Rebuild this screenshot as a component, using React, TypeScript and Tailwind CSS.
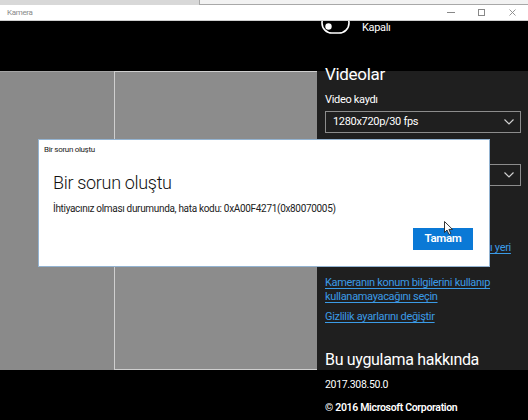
import React from 'react';

const font = { fontFamily: 'Roboto, "Noto Sans", sans-serif' };

function Toggle() {
  return (
    <svg width="30" height="13" viewBox="0 0 30 13" className="shrink-0">
      <rect x="1" y="-8" width="27" height="20" rx="10" fill="none" stroke="#ffffff" strokeWidth="1.6" />
      <circle cx="7.5" cy="5.5" r="3.2" fill="#ffffff" />
    </svg>
  );
}

function Chevron() {
  return (
    <svg width="12" height="8" viewBox="0 0 12 8" className="shrink-0">
      <path d="M1.5 1.5 L6 6 L10.5 1.5" fill="none" stroke="#d0d0d0" strokeWidth="1.2" />
    </svg>
  );
}

function Cursor() {
  return (
    <svg width="10" height="15" viewBox="0 0 10 15">
      <path d="M0.5 0.5 L0.5 11.5 L3 9 L5 13.5 L6.8 12.7 L4.9 8.4 L8.5 8.4 Z" fill="#ffffff" stroke="#222222" strokeWidth="0.9" strokeLinejoin="round" />
    </svg>
  );
}

function WindowControls() {
  return (
    <div className="flex items-center h-full">
      <div className="w-[31px] h-full flex items-center justify-center">
        <div className="w-[8px] h-px bg-[#888888]" />
      </div>
      <div className="w-[31px] h-full flex items-center justify-center">
        <div className="w-[7px] h-[7px] border border-[#888888]" />
      </div>
      <div className="w-[31px] h-full flex items-center justify-center">
        <svg width="7" height="7" viewBox="0 0 7 7">
          <path d="M0.5 0.5 L6.5 6.5 M6.5 0.5 L0.5 6.5" stroke="#888888" strokeWidth="0.9" />
        </svg>
      </div>
    </div>
  );
}

function Dropdown({ value }: { value: string }) {
  return (
    <div className="h-[22px] w-[196px] border border-[#8c8c8c] flex items-center justify-between pl-[7px] pr-[5px] text-[11px] text-white">
      <span>{value}</span>
      <Chevron />
    </div>
  );
}

function Link({ children }: { children: React.ReactNode }) {
  return <span className="text-[#3b9be6] underline underline-offset-2 decoration-[#3b9be6]">{children}</span>;
}

export default function App() {
  return (
    <div className="relative w-[528px] h-[420px] overflow-hidden bg-black select-none tracking-[-0.02em]" style={font}>
      {/* desktop strip behind the window */}
      <div className="flex h-[5px]">
        <div className="w-[199px] bg-[#d8d8d8]" />
        <div className="flex-1 bg-[#f2f2f2] border-l border-b border-[#a8a8a8]" />
      </div>

      {/* title bar */}
      <div className="h-[16px] bg-white border-b border-[#cfcfcf] flex items-center justify-between pl-[7px]">
        <span className="text-[8px] text-[#8a8a8a] leading-none">Kamera</span>
        <WindowControls />
      </div>

      {/* top letterbox with toggle */}
      <div className="h-[50px] flex items-start pl-[321px]">
        <div className="flex items-center gap-[11px] h-[13px]">
          <Toggle />
          <span className="text-[11px] text-white leading-none">Kapalı</span>
        </div>
      </div>

      {/* main area */}
      <div className="h-[299px] flex">
        <div className="w-[114px] bg-[#8a8a8a] border-t border-[#a4a4a4]" />
        <div className="w-[203px] bg-[#8c8c8c] border-t border-l border-b border-[#cfcfcf]" />
        <div className="flex-1 bg-[#1f1f1f] flex flex-col pl-[8px]">
          <div className="text-[17px] text-white leading-none -mt-[5px]">Videolar</div>
          <div className="text-[11px] text-white leading-none mt-[11px]">Video kaydı</div>
          <div className="mt-[6px]">
            <Dropdown value="1280x720p/30 fps" />
          </div>
          <div className="mt-[31px]">
            <Dropdown value="" />
          </div>
          {/* link mostly hidden behind the dialog: only its tail shows */}
          <div className="mt-[56px] pl-[165px] whitespace-nowrap text-[11px] leading-none">
            <Link>ı yeri</Link>
          </div>
          <div className="mt-[23px] text-[11px] leading-[14px] whitespace-nowrap">
            <Link>Kameranın konum bilgilerini kullanıp</Link>
            <br />
            <Link>kullanamayacağını seçin</Link>
          </div>
          <div className="mt-[7px] text-[11px] leading-none">
            <Link>Gizlilik ayarlarını değiştir</Link>
          </div>
          <div className="mt-auto -mb-[1px] text-[16px] text-white leading-[22px]">Bu uygulama hakkında</div>
        </div>
      </div>

      {/* bottom letterbox */}
      <div className="pl-[325px] pt-[10px] flex flex-col text-[10.5px] text-white leading-none">
        <span>2017.308.50.0</span>
        <span className="mt-[12px] font-semibold">© 2016 Microsoft Corporation</span>
      </div>

      {/* error dialog */}
      <div className="absolute left-[38px] top-[139px] w-[452px] h-[128px] bg-white border border-[#94b4d2] flex flex-col">
        <div className="pl-[5px] pt-[6px] text-[8px] text-[#222222] leading-none">Bir sorun oluştu</div>
        <div className="pl-[14px] mt-[20px] text-[18px] text-[#111111] leading-none font-light">Bir sorun oluştu</div>
        <div className="pl-[14px] mt-[12px] text-[10px] text-[#222222] leading-none">
          İhtiyacınız olması durumunda, hata kodu: 0xA00F4271(0x80070005)
        </div>
        <div className="mt-auto mb-[16px] pr-[16px] flex justify-end">
          <button className="w-[60px] h-[22px] bg-[#0a79d6] text-white text-[11.5px] font-semibold leading-none">
            Tamam
          </button>
        </div>
      </div>

      {/* mouse pointer */}
      <div className="absolute left-[444px] top-[221px]">
        <Cursor />
      </div>
    </div>
  );
}
